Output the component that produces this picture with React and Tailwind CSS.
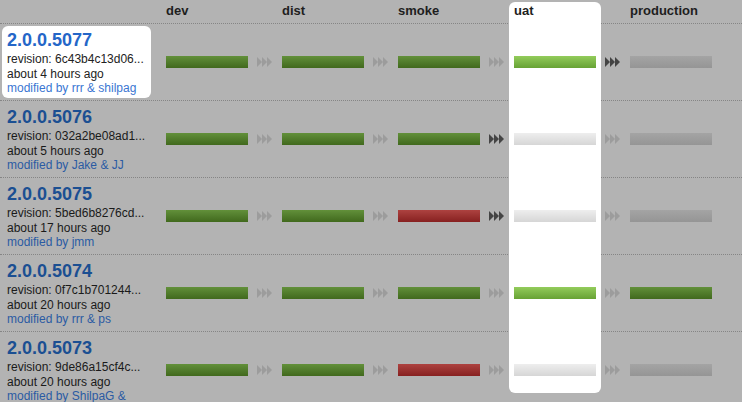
import React from "react";

const stages = ["dev", "dist", "smoke", "uat", "production"];

const barClass = {
  green: "bg-gradient-to-b from-[#62903a] to-[#41691d]",
  bright: "bg-gradient-to-b from-[#93cc5b] to-[#67a234]",
  red: "bg-gradient-to-b from-[#ad4240] to-[#872020]",
  gray: "bg-gradient-to-b from-[#a4a4a4] to-[#959595]",
  light: "bg-gradient-to-b from-[#eeeeee] to-[#d6d6d6]",
};

const builds = [
  {
    version: "2.0.0.5077",
    revision: "6c43b4c13d06...",
    age: "about 4 hours ago",
    by: "modified by rrr & shilpag",
    active: true,
    bars: ["green", "green", "green", "bright", "gray"],
    arrows: [false, false, false, true],
  },
  {
    version: "2.0.0.5076",
    revision: "032a2be08ad1...",
    age: "about 5 hours ago",
    by: "modified by Jake & JJ",
    bars: ["green", "green", "green", "light", "gray"],
    arrows: [false, false, true, false],
  },
  {
    version: "2.0.0.5075",
    revision: "5bed6b8276cd...",
    age: "about 17 hours ago",
    by: "modified by jmm",
    bars: ["green", "green", "red", "light", "gray"],
    arrows: [false, false, true, false],
  },
  {
    version: "2.0.0.5074",
    revision: "0f7c1b701244...",
    age: "about 20 hours ago",
    by: "modified by rrr & ps",
    bars: ["green", "green", "green", "bright", "green"],
    arrows: [false, false, false, false],
  },
  {
    version: "2.0.0.5073",
    revision: "9de86a15cf4c...",
    age: "about 20 hours ago",
    by: "modified by ShilpaG &",
    bars: ["green", "green", "red", "light", "gray"],
    arrows: [false, false, false, false],
  },
];

const Arrows = ({ dark }) => (
  <svg width="15" height="10" viewBox="0 0 15 10" className="ml-[9px] shrink-0">
    <g fill={dark ? "#444444" : "#9c9c9c"}>
      <polygon points="0,0 5,5 0,10" />
      <polygon points="5,0 10,5 5,10" />
      <polygon points="10,0 15,5 10,10" />
    </g>
  </svg>
);

const BuildCard = ({ build }) => (
  <div
    className={`ml-[2px] mt-[2px] h-[72px] w-[149px] overflow-hidden rounded-[6px] pl-[5px] pt-[4px] ${
      build.active ? "bg-white" : ""
    }`}
  >
    <div
      className={`text-[18px] font-bold leading-[20px] ${
        build.active ? "text-[#2466c8]" : "text-[#1b4f92]"
      }`}
    >
      {build.version}
    </div>
    <div
      className={`mt-[2px] text-[12px] leading-[14.5px] ${
        build.active ? "text-[#222222]" : "text-[#1a1a1a]"
      }`}
    >
      <div className="whitespace-nowrap">revision: {build.revision}</div>
      <div className="whitespace-nowrap">{build.age}</div>
      <div
        className={`whitespace-nowrap ${
          build.active ? "text-[#3a76d2]" : "text-[#2b5ba3]"
        }`}
      >
        {build.by}
      </div>
    </div>
  </div>
);

const App = () => {
  return (
    <div
      className="relative h-[402px] w-[742px] overflow-hidden bg-[#b3b3b3]"
      style={{ fontFamily: '"Liberation Sans", Arial, sans-serif' }}
    >
      <div className="absolute left-[509px] top-[2px] z-[1] h-[391px] w-[92px] rounded-[6px] bg-white" />

      <div className="flex h-[23px]">
        <div className="w-[166px] shrink-0" />
        {stages.map((stage) => (
          <div
            key={stage}
            className={`w-[116px] shrink-0 text-[13px] font-bold leading-[22px] text-[#1e1e1e] ${
              stage === "uat" ? "relative z-[2]" : ""
            }`}
          >
            {stage}
          </div>
        ))}
      </div>

      {builds.map((build) => (
        <div
          key={build.version}
          className="flex h-[77px] border-t border-dotted border-[#858585]"
        >
          <div className="w-[166px] shrink-0">
            <BuildCard build={build} />
          </div>
          {build.bars.map((bar, i) => (
            <div key={i} className="flex w-[116px] shrink-0 items-center">
              <div
                className={`h-[12px] w-[82px] shrink-0 ${barClass[bar]} ${
                  i === 3 ? "relative z-[2]" : ""
                }`}
              />
              {i < 4 && <Arrows dark={build.arrows[i]} />}
            </div>
          ))}
        </div>
      ))}
    </div>
  );
};

export default App;
